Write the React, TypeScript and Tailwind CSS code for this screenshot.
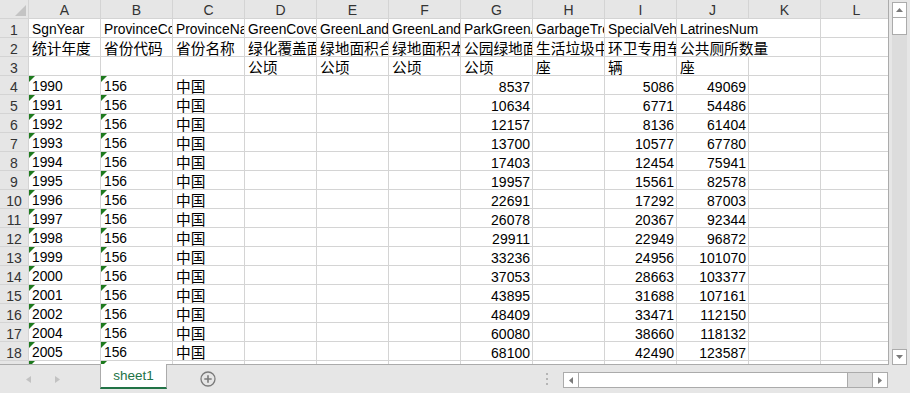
import React from "react";

const FONT = { fontFamily: '"Liberation Sans", "Noto Sans CJK SC", Arial, sans-serif' };

const cols = ["A", "B", "C", "D", "E", "F", "G", "H", "I", "J", "K", "L"];

const years = [1990, 1991, 1992, 1993, 1994, 1995, 1996, 1997, 1998, 1999, 2000, 2001, 2002, 2004, 2005];
const gv = [8537, 10634, 12157, 13700, 17403, 19957, 22691, 26078, 29911, 33236, 37053, 43895, 48409, 60080, 68100];
const iv = [5086, 6771, 8136, 10577, 12454, 15561, 17292, 20367, 22949, 24956, 28663, 31688, 33471, 38660, 42490];
const jv = [49069, 54486, 61404, 67780, 75941, 82578, 87003, 92344, 96872, 101070, 103377, 107161, 112150, 118132, 123587];

type C = { v?: string; right?: boolean; cjk?: boolean; tri?: boolean; spill?: boolean };

const row1: C[] = [
  { v: "SgnYear" },
  { v: "ProvinceCode" },
  { v: "ProvinceName" },
  { v: "GreenCoverArea" },
  { v: "GreenLandArea" },
  { v: "GreenLandAreaB" },
  { v: "ParkGreenArea" },
  { v: "GarbageTreat" },
  { v: "SpecialVehicle" },
  { v: "LatrinesNum", spill: true },
  {},
  {},
];
const row2: C[] = [
  { v: "统计年度", cjk: true },
  { v: "省份代码", cjk: true },
  { v: "省份名称", cjk: true },
  { v: "绿化覆盖面积", cjk: true },
  { v: "绿地面积合计", cjk: true },
  { v: "绿地面积本年", cjk: true },
  { v: "公园绿地面积", cjk: true },
  { v: "生活垃圾中转", cjk: true },
  { v: "环卫专用车辆", cjk: true },
  { v: "公共厕所数量", cjk: true, spill: true },
  {},
  {},
];
const row3: C[] = [
  {},
  {},
  {},
  { v: "公顷", cjk: true },
  { v: "公顷", cjk: true },
  { v: "公顷", cjk: true },
  { v: "公顷", cjk: true },
  { v: "座", cjk: true },
  { v: "辆", cjk: true },
  { v: "座", cjk: true },
  {},
  {},
];

const dataRows: C[][] = years.map((y, i) => [
  { v: String(y), tri: true },
  { v: "156", tri: true },
  { v: "中国", cjk: true },
  {},
  {},
  {},
  { v: String(gv[i]), right: true },
  {},
  { v: String(iv[i]), right: true },
  { v: String(jv[i]), right: true },
  {},
  {},
]);

const partial: C[] = [{ tri: true }, { tri: true }, { v: "中国", cjk: true }, {}, {}, {}, {}, {}, {}, {}, {}, {}];

const allRows: C[][] = [row1, row2, row3, ...dataRows, partial];

function Cell({ c }: { c: C }) {
  return (
    <div
      className={
        "relative w-[72px] h-[19px] shrink-0 border-b border-[#d4d4d4] " +
        (c.spill ? "border-r border-r-transparent z-10" : "border-r")
      }
    >
      {c.tri && (
        <div className="absolute left-0 top-0 w-0 h-0 border-t-[6px] border-r-[6px] border-t-[#1e7a1e] border-r-transparent" />
      )}
      {c.v && (
        <div
          className={
            "h-[18px] whitespace-nowrap text-black leading-[22px] " +
            (c.spill ? "overflow-visible pl-[3px] " : "overflow-hidden ") +
            (c.right ? "text-right pr-[2px] text-[14px] " : "pl-[3px] ") +
            (c.cjk ? "text-[14.7px]" : c.right ? "" : "text-[13.8px]")
          }
        >
          {c.v}
        </div>
      )}
    </div>
  );
}

function Grid() {
  return (
    <div className="w-[889px] h-[365px] overflow-hidden border-r border-b border-[#ababab] bg-white">
      <div className="flex h-[19px]">
        <div className="relative w-[29px] h-[19px] shrink-0 bg-[#e6e6e6] border-r border-b border-[#d4d4d4]">
          <svg className="absolute left-[15px] top-[5px]" width="11" height="11" viewBox="0 0 11 11">
            <polygon points="11,0 11,11 0,11" fill="#c4c4c4" />
          </svg>
        </div>
        {cols.map((l) => (
          <div
            key={l}
            className="w-[72px] h-[19px] shrink-0 bg-[#e6e6e6] border-r border-b border-[#d4d4d4] text-center text-[14px] leading-[21px] text-[#333]"
          >
            <div className="h-[18px] overflow-hidden">{l}</div>
          </div>
        ))}
      </div>
      {allRows.map((r, ri) => (
        <div key={ri} className="flex h-[19px]">
          <div className="w-[29px] h-[19px] shrink-0 bg-[#e6e6e6] border-r border-b border-[#d4d4d4] text-center text-[14px] leading-[22px] text-[#333]">
            <div className="h-[18px] overflow-hidden">{ri + 1}</div>
          </div>
          {r.map((c, ci) => (
            <Cell key={ci} c={c} />
          ))}
        </div>
      ))}
    </div>
  );
}

function VScroll() {
  return (
    <div className="w-[21px] h-[365px] pl-[3px] pr-[3px] pt-[2px] flex flex-col">
      <div className="flex-1 flex flex-col bg-[#dcdcdc]">
        <div className="h-[16px] bg-white border border-[#ababab] flex items-center justify-center">
          <svg width="7" height="4" viewBox="0 0 7 4">
            <polygon points="3.5,0 7,4 0,4" fill="#7a7a7a" />
          </svg>
        </div>
        <div className="h-[17px] bg-white border border-t-0 border-[#ababab]" />
        <div className="flex-1" />
        <div className="h-[16px] bg-white border border-[#ababab] flex items-center justify-center">
          <svg width="7" height="4" viewBox="0 0 7 4">
            <polygon points="0,0 7,0 3.5,4" fill="#7a7a7a" />
          </svg>
        </div>
      </div>
    </div>
  );
}

function BottomBar() {
  return (
    <div className="h-[28px] flex bg-[#e6e6e6]">
      <div className="w-[100px] shrink-0 flex items-center">
        <svg className="ml-[26px] mt-[1px]" width="5" height="7" viewBox="0 0 5 7">
          <polygon points="5,0 5,7 0,3.5" fill="#c2c2c2" />
        </svg>
        <svg className="ml-[24px] mt-[1px]" width="5" height="7" viewBox="0 0 5 7">
          <polygon points="0,0 5,3.5 0,7" fill="#c2c2c2" />
        </svg>
      </div>
      <div className="w-[67px] h-[25px] -mt-px shrink-0 bg-white border-l border-r border-[#ababab] border-b-2 border-b-[#217346] flex items-center justify-center">
        <span className="text-[13.5px] text-[#217346] leading-none" style={FONT}>
          sheet1
        </span>
      </div>
      <div className="w-[371px] shrink-0 flex items-center">
        <svg className="ml-[33px]" width="16" height="16" viewBox="0 0 16 16">
          <circle cx="8" cy="8" r="7" fill="none" stroke="#7b7b7b" strokeWidth="1.3" />
          <path d="M8 4.3v7.4M4.3 8h7.4" stroke="#7b7b7b" strokeWidth="1.6" />
        </svg>
      </div>
      <div className="w-[17px] shrink-0 flex flex-col items-center justify-center gap-[3px]">
        <div className="w-[2px] h-[2px] bg-[#b5b5b5]" />
        <div className="w-[2px] h-[2px] bg-[#b5b5b5]" />
        <div className="w-[2px] h-[2px] bg-[#b5b5b5]" />
      </div>
      <div className="pt-[7px] ml-[8px]">
        <div className="w-[325px] h-[16px] flex border border-[#ababab] bg-[#dcdcdc]">
          <div className="w-[15px] bg-white border-r border-[#ababab] flex items-center justify-center">
            <svg width="4" height="7" viewBox="0 0 4 7">
              <polygon points="4,0 4,7 0,3.5" fill="#7a7a7a" />
            </svg>
          </div>
          <div className="w-[269px] bg-white border-r border-[#ababab]" />
          <div className="flex-1" />
          <div className="w-[15px] bg-white border-l border-[#ababab] flex items-center justify-center">
            <svg width="4" height="7" viewBox="0 0 4 7">
              <polygon points="0,0 4,3.5 0,7" fill="#7a7a7a" />
            </svg>
          </div>
        </div>
      </div>
    </div>
  );
}

export default function App() {
  return (
    <div className="w-[910px] h-[393px] overflow-hidden bg-[#e6e6e6] flex flex-col" style={FONT}>
      <div className="flex h-[365px]">
        <Grid />
        <VScroll />
      </div>
      <BottomBar />
    </div>
  );
}
